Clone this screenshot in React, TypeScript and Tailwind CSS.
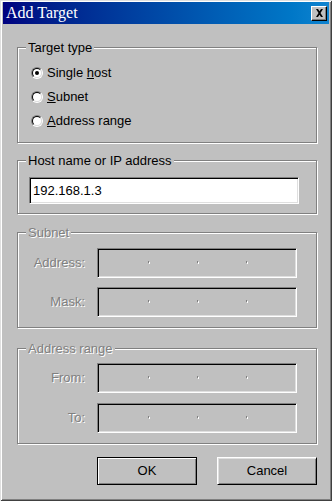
import React from 'react';

function Radio({ checked }: { checked?: boolean }) {
  return (
    <span className="flex w-[12px] h-[12px] shrink-0 rounded-full border border-t-[#808080] border-l-[#808080] border-r-white border-b-white">
      <span className="flex flex-1 items-center justify-center rounded-full border border-t-black border-l-black border-r-[#dfdfdf] border-b-[#dfdfdf] bg-white">
        {checked && <span className="w-[4px] h-[4px] rounded-full bg-black" />}
      </span>
    </span>
  );
}

function GroupBox({
  title,
  disabled,
  className,
  children,
}: {
  title: string;
  disabled?: boolean;
  className: string;
  children: React.ReactNode;
}) {
  return (
    <div className={`border border-[#808080] shadow-[inset_1px_1px_0_#fff,1px_1px_0_#fff] ${className}`}>
      <span
        className={`block w-fit -mt-[8px] ml-[8px] px-[2px] bg-[#c0c0c0] leading-[15px] ${
          disabled ? 'text-[#808080] [text-shadow:1px_1px_0_#fff]' : 'text-black'
        }`}
      >
        {title}
      </span>
      {children}
    </div>
  );
}

function Dot() {
  return <span className="w-[1px] h-[2px] -mt-[2px] bg-[#808080] shadow-[1px_1px_0_#fff]" />;
}

function IpField() {
  return (
    <div className="flex items-center w-[200px] h-[30px] border border-t-[#808080] border-l-[#808080] border-r-white border-b-white shadow-[inset_1px_1px_0_#000,inset_-1px_-1px_0_#dfdfdf]">
      <span className="w-[50px] shrink-0" />
      <Dot />
      <span className="w-[48px] shrink-0" />
      <Dot />
      <span className="w-[48px] shrink-0" />
      <Dot />
    </div>
  );
}

function FieldRow({ label }: { label: string }) {
  return (
    <div className="flex items-center">
      <span className="w-[67px] text-right text-[#808080] [text-shadow:1px_1px_0_#fff]">{label}</span>
      <div className="ml-[12px]">
        <IpField />
      </div>
    </div>
  );
}

export default function App() {
  return (
    <div className="w-[332px] h-[501px] bg-[#c0c0c0] pt-[2px] px-[3px] font-['Liberation_Sans',Arial,sans-serif] text-[13px] text-black shadow-[inset_1px_1px_0_#dfdfdf,inset_-1px_-1px_0_#404040,inset_2px_2px_0_#fff,inset_-2px_-2px_0_#808080] overflow-hidden">
      <div className="flex items-center h-[22px] pl-[3px] pr-[2px] bg-gradient-to-r from-[#000080] to-[#1084d0]">
        <span className="flex-1 font-['Liberation_Serif',serif] text-[16px] text-white leading-none">Add Target</span>
        <button className="flex items-center justify-center w-[16px] h-[15px] bg-[#c0c0c0] border border-t-white border-l-white border-r-black border-b-black shadow-[inset_-1px_-1px_0_#808080]">
          <svg width="9" height="8" viewBox="0 0 9 8">
            <path d="M1 0h2l1.5 2.2L6 0h2L5.5 4 8 8H6L4.5 5.8 3 8H1l2.5-4z" fill="#000" />
          </svg>
        </button>
      </div>

      <div className="ml-[14px] w-[300px]">
        <GroupBox title="Target type" className="mt-[23px] h-[96px]">
          <div className="mt-[6px] pl-[13px] flex flex-col">
            <label className="flex items-center h-[24px] gap-[4px]">
              <Radio checked />
              <span>
                Single <u>h</u>ost
              </span>
            </label>
            <label className="flex items-center h-[24px] gap-[4px]">
              <Radio />
              <span>
                <u>S</u>ubnet
              </span>
            </label>
            <label className="flex items-center h-[24px] gap-[4px]">
              <Radio />
              <span>
                <u>A</u>ddress range
              </span>
            </label>
          </div>
        </GroupBox>

        <GroupBox title="Host name or IP address" className="mt-[17px] h-[54px]">
          <div className="mt-[9px] ml-[11px] flex items-center w-[270px] h-[27px] pl-[3px] bg-white border border-t-[#808080] border-l-[#808080] border-r-white border-b-white shadow-[inset_1px_1px_0_#000,inset_-1px_-1px_0_#dfdfdf]">
            192.168.1.3
          </div>
        </GroupBox>

        <GroupBox title="Subnet" disabled className="mt-[18px] h-[96px]">
          <div className="mt-[8px] flex flex-col gap-[9px]">
            <FieldRow label="Address:" />
            <FieldRow label="Mask:" />
          </div>
        </GroupBox>

        <GroupBox title="Address range" disabled className="mt-[20px] h-[96px]">
          <div className="mt-[7px] flex flex-col gap-[10px]">
            <FieldRow label="From:" />
            <FieldRow label="To:" />
          </div>
        </GroupBox>

        <div className="mt-[13px] flex justify-end gap-[20px]">
          <button className="w-[100px] h-[28px] bg-[#c0c0c0] border border-black shadow-[inset_1px_1px_0_#fff,inset_-1px_-1px_0_#808080]">
            OK
          </button>
          <button className="w-[100px] h-[28px] bg-[#c0c0c0] border border-t-white border-l-white border-r-black border-b-black shadow-[inset_1px_1px_0_#dfdfdf,inset_-1px_-1px_0_#808080]">
            Cancel
          </button>
        </div>
      </div>
    </div>
  );
}
